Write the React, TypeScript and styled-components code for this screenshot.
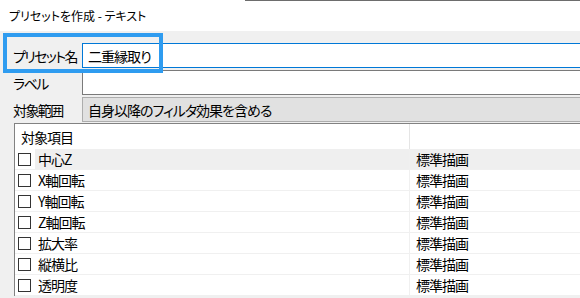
import React from "react";
import styled, { createGlobalStyle } from "styled-components";

const Global = createGlobalStyle`
  html, body { margin: 0; padding: 0; background: #f0f0f0; }
  body {
    font-family: "Noto Sans CJK JP", "Noto Sans", sans-serif;
    font-feature-settings: "palt" 1;
    color: #000;
    overflow: hidden;
  }
`;

const Page = styled.div`
  position: relative;
  width: 600px;
  height: 298px;
  overflow: hidden;
  background: #f0f0f0;
  font-size: 14px;
  letter-spacing: -1px;
`;

const TitleBar = styled.div`
  position: relative;
  height: 31px;
  background: #fff;
  display: flex;
  align-items: center;
  padding-left: 9px;
  font-size: 12px;
  letter-spacing: 0;
  &::before {
    content: "";
    position: absolute;
    left: 245px;
    right: 0;
    top: 0;
    height: 1px;
    background: #6d6d6d;
  }
`;

const Form = styled.div`
  display: grid;
  grid-template-columns: 69px 1fr;
  grid-auto-rows: 25px;
  row-gap: 2px;
  padding: 12px 0 0 13px;
`;

const Label = styled.div`
  display: flex;
  align-items: center;
  padding-top: 1px;
  letter-spacing: -1.6px;
  white-space: nowrap;
`;

const Field = styled.div<{ $variant: "focus" | "normal" | "combo" }>`
  box-sizing: border-box;
  display: flex;
  align-items: center;
  padding-left: 5px;
  border: 1px solid
    ${(p) =>
      p.$variant === "focus" ? "#0078d7" : p.$variant === "combo" ? "#adadad" : "#7a7a7a"};
  background: ${(p) => (p.$variant === "combo" ? "#e1e1e1" : "#fff")};
`;

const Table = styled.div`
  margin: 1px 0 0 14px;
  border-left: 1px solid #828282;
  border-top: 1px solid #828282;
  background: #fff;
`;

const HeaderRow = styled.div`
  display: grid;
  grid-template-columns: 395px 1fr;
  height: 25px;
`;

const HeaderCell = styled.div<{ $divider?: boolean }>`
  display: flex;
  align-items: center;
  padding-left: 6px;
  border-right: ${(p) => (p.$divider ? "1px solid #e5e5e5" : "none")};
`;

const Row = styled.div`
  display: grid;
  grid-template-columns: 395px 1fr;
  height: 21px;
  box-sizing: border-box;
  border-bottom: 1px solid #f0f0f0;
`;

const NameCell = styled.div`
  display: flex;
  align-items: center;
  padding-left: 3px;
  border-right: 1px solid #f0f0f0;
`;

const Check = styled.span`
  box-sizing: border-box;
  width: 13px;
  height: 13px;
  border: 1px solid #333;
  background: #fff;
  flex: none;
`;

const NameText = styled.span<{ $selected?: boolean }>`
  flex: 1;
  align-self: stretch;
  display: flex;
  align-items: center;
  margin-left: 4px;
  padding-left: 3px;
  background: ${(p) => (p.$selected ? "#efefef" : "transparent")};
`;

const ValueCell = styled.div<{ $selected?: boolean }>`
  display: flex;
  align-items: center;
  padding-left: 6px;
  background: ${(p) => (p.$selected ? "#efefef" : "transparent")};
`;

const Highlight = styled.div`
  position: absolute;
  left: 3px;
  top: 33px;
  width: 160px;
  height: 40px;
  box-sizing: border-box;
  border: 4px solid #2f9cf0;
  pointer-events: none;
`;

const items = ["中心Z", "X軸回転", "Y軸回転", "Z軸回転", "拡大率", "縦横比", "透明度"];

export default function App() {
  return (
    <Page>
      <Global />
      <TitleBar>プリセットを作成 - テキスト</TitleBar>
      <Form>
        <Label>プリセット名</Label>
        <Field $variant="focus">二重縁取り</Field>
        <Label>ラベル</Label>
        <Field $variant="normal" />
        <Label>対象範囲</Label>
        <Field $variant="combo">自身以降のフィルタ効果を含める</Field>
      </Form>
      <Table>
        <HeaderRow>
          <HeaderCell $divider>対象項目</HeaderCell>
          <HeaderCell />
        </HeaderRow>
        {items.map((name, i) => (
          <Row key={name}>
            <NameCell>
              <Check />
              <NameText $selected={i === 0}>{name}</NameText>
            </NameCell>
            <ValueCell $selected={i === 0}>標準描画</ValueCell>
          </Row>
        ))}
      </Table>
      <Highlight />
    </Page>
  );
}
